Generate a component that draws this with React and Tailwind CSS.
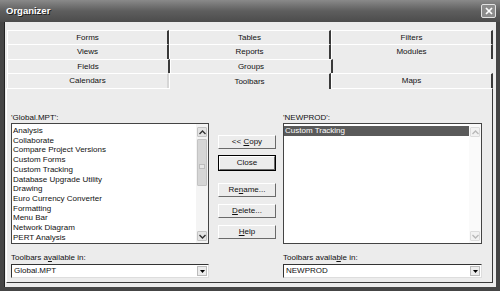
import React from "react";

const leftItems = [
  "Analysis",
  "Collaborate",
  "Compare Project Versions",
  "Custom Forms",
  "Custom Tracking",
  "Database Upgrade Utility",
  "Drawing",
  "Euro Currency Converter",
  "Formatting",
  "Menu Bar",
  "Network Diagram",
  "PERT Analysis",
];

const Chevron = ({ up, light }) => (
  <svg width="7" height="5" viewBox="0 0 7 5">
    <path
      d={up ? "M0.5 4 L3.5 1 L6.5 4" : "M0.5 1 L3.5 4 L6.5 1"}
      fill="none"
      stroke={light ? "#b8b8b8" : "#333"}
      strokeWidth="1.4"
    />
  </svg>
);

const ArrowBox = ({ up, light }) => (
  <div
    className={`h-[10px] flex items-center justify-center border rounded-[1px] ${
      light ? "bg-[#f2f2f2] border-[#dcdcdc]" : "bg-[#e4e4e4] border-[#c4c4c4]"
    }`}
  >
    <Chevron up={up} light={light} />
  </div>
);

const Tab = ({ label, right = "border-r-[#3a3a3a]", className = "" }) => (
  <div
    className={`flex-1 flex items-center justify-center border-t border-l border-t-white border-l-white border-r-2 ${right} ${className}`}
  >
    {label}
  </div>
);

const Button = ({ children, def, className = "" }) => (
  <div className={`${def ? "border border-black" : ""} ${className}`}>
    <div className="h-[14px] flex items-center justify-center bg-[#ececec] border border-t-white border-l-white border-r-[#6a6a6a] border-b-[#6a6a6a]">
      {children}
    </div>
  </div>
);

const Dropdown = ({ value }) => (
  <div className="h-[14px] flex items-center bg-white border border-t-[#333] border-l-[#333] border-r-[#ddd] border-b-[#ddd]">
    <span className="flex-1 pl-[2px]">{value}</span>
    <div className="w-[10px] h-[10px] mr-[1px] flex items-center justify-center bg-[#ececec] border border-[#bbb]">
      <svg width="5" height="3" viewBox="0 0 5 3">
        <path d="M0 0 H5 L2.5 3 Z" fill="#000" />
      </svg>
    </div>
  </div>
);

export default function App() {
  return (
    <div className="w-[500px] h-[291px] bg-[#454545] flex flex-col font-['Liberation_Sans',Arial,sans-serif] text-[8px] text-[#111] overflow-hidden">
      <div className="h-[22px] flex items-center justify-between bg-gradient-to-b from-[#8a8a8a] via-[#5e5e5e] to-[#4c4c4c] pl-[6px] pr-[4px]">
        <span className="text-white font-bold text-[9.5px] [text-shadow:1px_1px_0_#222]">
          Organizer
        </span>
        <div className="w-[15px] h-[14px] rounded-[2px] bg-[#8c8c8c] border border-[#e2e2e2] flex items-center justify-center">
          <svg width="8" height="8" viewBox="0 0 8 8">
            <path d="M1 1 L7 7 M7 1 L1 7" stroke="#fff" strokeWidth="1.7" />
          </svg>
        </div>
      </div>

      <div className="flex-1 flex flex-col ml-[4px] mr-[4px] mb-[4px] bg-[#ececec] border-l border-[#222] pl-[1px] pr-[3px] pt-[8px] pb-[4px]">
        <div className="ml-[1px] flex flex-col">
          <div className="h-[14px] flex">
            <Tab label="Forms" />
            <Tab label="Tables" />
            <Tab label="Filters" />
          </div>
          <div className="h-[15px] flex">
            <Tab label="Views" />
            <Tab label="Reports" />
            <Tab label="Modules" />
          </div>
          <div className="h-[14px] flex">
            <Tab label="Fields" />
            <Tab label="Groups" />
            <div className="flex-1" />
          </div>
          <div className="h-[15px] flex">
            <Tab label="Calendars" right="border-r-[#d6d6d6]" />
            <Tab label="Toolbars" className="relative -mb-[1px] bg-[#ececec] z-10" />
            <Tab label="Maps" />
          </div>
        </div>

        <div className="flex-1 flex border border-t-white border-l-white border-r-[#3a3a3a] border-b-[#3a3a3a] pl-[4px] pr-[9px]">
          <div className="w-[198px] flex flex-col pt-[23px]">
            <div className="h-[11px] leading-[11px]">'Global.MPT':</div>
            <div className="h-[121px] flex bg-white border border-[#444]">
              <div className="flex-1 pt-[2px] pl-[1px] leading-[9.7px] whitespace-nowrap">
                {leftItems.map((it) => (
                  <div key={it}>{it}</div>
                ))}
              </div>
              <div className="w-[12px] flex flex-col p-[1px] pt-[3px] pb-[2px] bg-[#f4f4f4]">
                <ArrowBox up />
                <div className="h-[47px] mt-[2px] bg-[#d6d6d6] border border-[#c4c4c4] rounded-[1px] flex items-end justify-center pb-[16px]">
                  <div className="w-[6px] h-[5px] border border-[#bdbdbd] bg-[#e6e6e6]" />
                </div>
                <div className="flex-1" />
                <ArrowBox />
              </div>
            </div>
            <div className="mt-[9px] h-[10px] leading-[10px]">
              Toolbars a<u>v</u>ailable in:
            </div>
            <div className="mt-[1px]">
              <Dropdown value="Global.MPT" />
            </div>
          </div>

          <div className="w-[58px] ml-[9px] flex flex-col">
            <Button className="mt-[46px]">
              <span className="whitespace-pre">{"<< "}</span>
              <u>C</u>opy
            </Button>
            <Button def className="mt-[6px]">
              Close
            </Button>
            <Button className="mt-[12px]">
              Re<u>n</u>ame...
            </Button>
            <Button className="mt-[7px]">
              <u>D</u>elete...
            </Button>
            <Button className="mt-[7px]">
              <u>H</u>elp
            </Button>
          </div>

          <div className="w-[199px] ml-[7px] flex flex-col pt-[23px]">
            <div className="h-[11px] leading-[11px]">'NEWPROD':</div>
            <div className="h-[121px] flex bg-white border border-[#444]">
              <div className="flex-1 pt-[2px] leading-[9.7px]">
                <div className="bg-[#5a5a5a] text-white pl-[1px]">Custom Tracking</div>
              </div>
              <div className="w-[12px] flex flex-col p-[1px] pt-[3px] pb-[2px] bg-[#fafafa]">
                <ArrowBox up light />
                <div className="flex-1" />
                <ArrowBox light />
              </div>
            </div>
            <div className="mt-[9px] h-[10px] leading-[10px]">
              Toolbars availa<u>b</u>le in:
            </div>
            <div className="mt-[1px]">
              <Dropdown value="NEWPROD" />
            </div>
          </div>
        </div>
      </div>
    </div>
  );
}
